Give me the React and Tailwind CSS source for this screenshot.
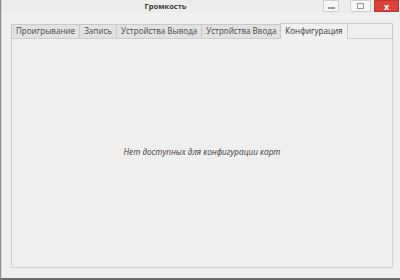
import React from 'react';

const tabs = ['Проигрывание', 'Запись', 'Устройства Вывода', 'Устройства Ввода'];

export default function App() {
  return (
    <div className="w-[400px] h-[280px] flex flex-col bg-[#efefef] border-l border-[#8a8a8a] border-b-2 border-b-[#6d6d6d] font-['Open_Sans',sans-serif] text-[#3c3c3c]">
      {/* title bar */}
      <div className="h-[13px] flex items-start bg-[#ececec] border-l border-[#d6d6d6]">
        <div className="flex-1 text-center text-[7.5px] leading-[12px] font-bold text-[#3a3a3a] pl-[6px]">Громкость</div>
        <div className="flex items-start h-[12px]">
          <button className="w-[16px] h-[12px] bg-[#f6f6f6] border border-[#cfcfcf] flex items-end justify-center pb-[2px]">
            <span className="w-[7px] h-[2px] bg-[#9a9a9a]" />
          </button>
          <button className="ml-[11px] w-[21px] h-[12px] bg-[#f6f6f6] border border-[#cfcfcf] flex items-center justify-center">
            <span className="w-[7px] h-[6px] border border-[#9a9a9a]" />
          </button>
          <button className="ml-[3px] mr-[1px] w-[25px] h-[12px] bg-[#dc4239] border border-[#b9382f] flex items-center justify-center text-white text-[9px] leading-none font-bold">
            x
          </button>
        </div>
      </div>
      <div className="flex-1 flex flex-col pl-[9px] pr-[7px] pt-[9px] pb-[10px] border-l border-[#dcdcdc]">
        <div className="flex items-end h-[16px]">
          {tabs.map((t) => (
            <div key={t} className="h-[14px] px-[4px] flex items-center text-[8.05px] leading-none text-[#4a4a4a] bg-[#e2e2e2] border-t border-l border-[#c9c9c9] whitespace-nowrap">
              {t}
            </div>
          ))}
          <div className="h-[16px] px-[4px] pb-[1px] flex items-center text-[8.05px] leading-none text-[#333] bg-[#f0f0f0] border-t border-l border-r border-[#c9c9c9] -mb-px relative z-10 whitespace-nowrap">
            Конфигурация
          </div>
          <div className="flex-1 h-[15px] border-t border-r border-[#c9c9c9]" />
        </div>
        <div className="flex-1 border border-[#cfcfcf] bg-[#efefef] flex items-center justify-center">
          <span className="text-[8.2px] italic text-[#3a3a3a] mt-[-2px]">Нет доступных для конфигурации карт</span>
        </div>
      </div>
    </div>
  );
}
